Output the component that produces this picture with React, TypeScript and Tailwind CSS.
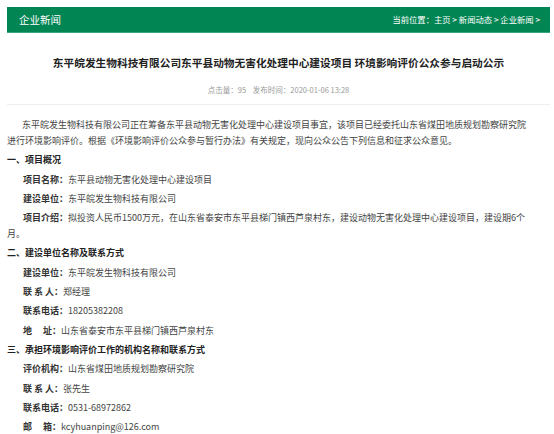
const rows = [
  { kind: 'p', text: '东平皖发生物科技有限公司正在筹备东平县动物无害化处理中心建设项目事宜，该项目已经委托山东省煤田地质规划勘察研究院进行环境影响评价。根据《环境影响评价公众参与暂行办法》有关规定，现向公众公告下列信息和征求公众意见。' },
  { kind: 'h', text: '一、项目概况' },
  { kind: 'kv', label: '项目名称：', text: '东平县动物无害化处理中心建设项目' },
  { kind: 'kv', label: '建设单位：', text: '东平皖发生物科技有限公司' },
  { kind: 'kv', label: '项目介绍：', text: '拟投资人民币1500万元，在山东省泰安市东平县梯门镇西芦泉村东，建设动物无害化处理中心建设项目，建设期6个月。' },
  { kind: 'h', text: '二、建设单位名称及联系方式' },
  { kind: 'kv', label: '建设单位：', text: '东平皖发生物科技有限公司' },
  { kind: 'kv', label: '联 系 人：', text: '郑经理' },
  { kind: 'kv', label: '联系电话：', text: '18205382208' },
  { kind: 'kv', label: '地　 址：', text: '山东省泰安市东平县梯门镇西芦泉村东' },
  { kind: 'h', text: '三、承担环境影响评价工作的机构名称和联系方式' },
  { kind: 'kv', label: '评价机构：', text: '山东省煤田地质规划勘察研究院' },
  { kind: 'kv', label: '联 系 人：', text: '张先生' },
  { kind: 'kv', label: '联系电话：', text: '0531-68972862' },
  { kind: 'kv', label: '邮　 箱：', text: 'kcyhuanping@126.com' },
]

export default function App() {
  return (
    <div
      className="w-[554px] h-[434px] overflow-hidden bg-white pt-[7px] pl-[7px] pr-[4px]"
      style={{ fontFamily: '"Microsoft YaHei", "Noto Sans CJK SC", sans-serif' }}
    >
      <div className="h-[26px] bg-[#008553] border-b border-[#3aa57a] flex items-center justify-between pl-[12px] pr-[10px]">
        <span className="text-[10.5px] text-white">企业新闻</span>
        <span className="text-[8.3px] text-white">当前位置：主页 &gt; 新闻动态 &gt; 企业新闻 &gt;</span>
      </div>

      <h1 className="mt-[22px] text-center text-[10.7px] leading-[16px] font-bold text-[#222]">
        东平皖发生物科技有限公司东平县动物无害化处理中心建设项目 环境影响评价公众参与启动公示
      </h1>
      <div className="mt-[14px] text-center text-[7.5px] leading-[10px] text-[#999]">
        点击量：95&nbsp;&nbsp;&nbsp;&nbsp;发布时间：2020-01-06 13:28
      </div>
      <div className="mt-[9px] border-t border-[#eeeeee]" />

      <div className="mt-[12px] w-[526px] text-[9px] leading-[16px] text-[#444]">
        {rows.map((r, i) => {
          if (r.kind === 'h') {
            return (
              <p key={i} className="mb-[3.3px] font-bold text-[#222]">
                {r.text}
              </p>
            )
          }
          if (r.kind === 'kv') {
            return (
              <p key={i} className="mb-[3.3px] indent-[16px]">
                <span className="font-bold text-[#333] whitespace-pre">{r.label}</span>
                <span>{r.text}</span>
              </p>
            )
          }
          return (
            <p key={i} className="mb-[3.3px] indent-[15px]">
              {r.text}
            </p>
          )
        })}
      </div>
    </div>
  )
}
